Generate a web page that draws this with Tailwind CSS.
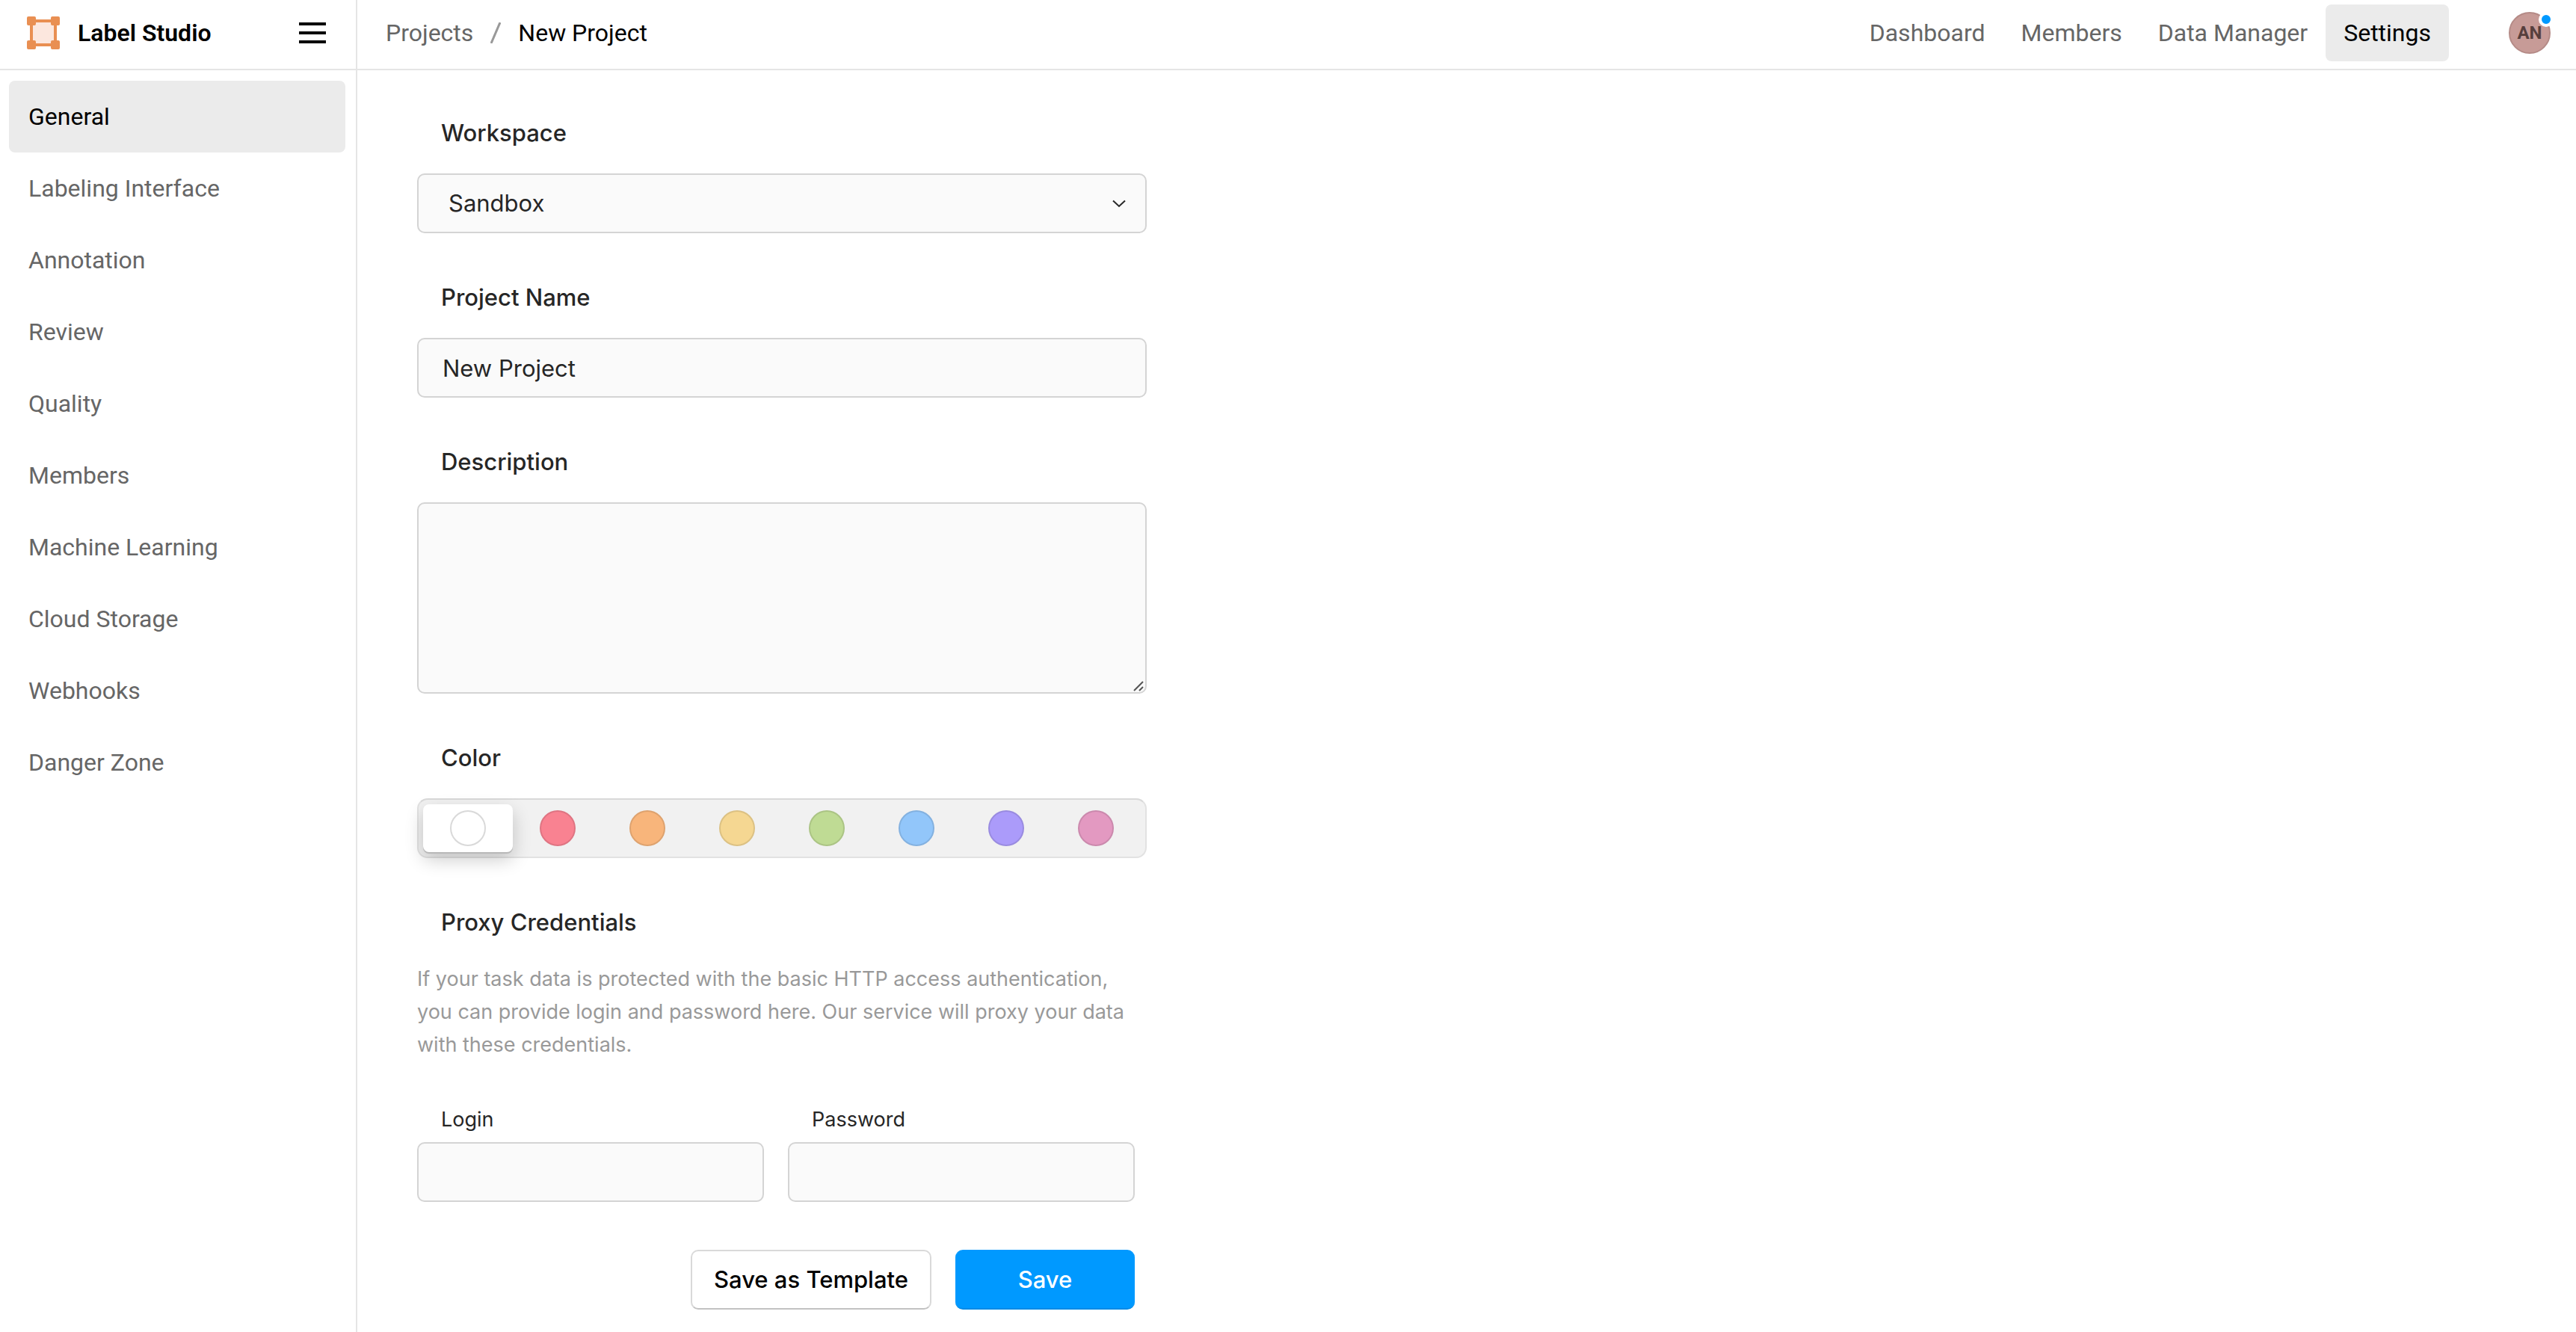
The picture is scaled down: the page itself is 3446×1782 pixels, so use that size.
<!DOCTYPE html>
<html lang="en">
<head>
<meta charset="utf-8">
<title>New Project – Settings</title>
<script src="https://cdn.jsdelivr.net/npm/@tailwindcss/browser@4"></script>
</head>
<body class="flex min-h-screen flex-col bg-white font-[Roboto,sans-serif] text-[32px] leading-[44px] text-black">
  <header class="flex h-[94px] shrink-0 border-b-2 border-[#e5e5e5]">
    <div class="flex w-[478px] shrink-0 items-center border-r-2 border-[#e5e5e5] pr-10 pb-1 pl-9">
      <svg class="size-11" viewBox="0 0 44 44" aria-hidden="true">
        <rect x="6" y="6" width="32" height="32" fill="#fce7de" stroke="#e98f52" stroke-width="4"/>
        <g fill="#e98f52"><rect width="12" height="12" rx="2"/><rect x="32" width="12" height="12" rx="2"/><rect y="32" width="12" height="12" rx="2"/><rect x="32" y="32" width="12" height="12" rx="2"/></g>
      </svg>
      <a href="#" class="ml-6 font-semibold">Label Studio</a>
      <button type="button" aria-label="Toggle menu" class="ml-auto">
        <svg class="h-7 w-9" viewBox="0 0 36 28"><path d="M0 2h36M0 14h36M0 26h36" stroke="#000" stroke-width="4"/></svg>
      </button>
    </div>
    <nav aria-label="Breadcrumb" class="flex items-center gap-[23px] pb-1 pl-[38px]">
      <a href="#" class="text-[#666]">Projects</a>
      <svg class="h-7 w-[14px]" viewBox="0 0 14 28" aria-hidden="true"><path d="M1 28L13 0" stroke="#999" stroke-width="3"/></svg>
      <a href="#">New Project</a>
    </nav>
    <nav aria-label="Project" class="ml-auto flex items-center pr-20 pb-1 text-[#666]">
      <a href="#" class="px-6 py-4">Dashboard</a>
      <a href="#" class="px-6 py-4">Members</a>
      <a href="#" class="px-6 py-4">Data Manager</a>
      <a href="#" class="rounded-lg bg-[#ebebeb] px-6 py-4 text-black">Settings</a>
    </nav>
    <div class="flex items-center pr-[34px] pb-1">
      <button type="button" class="relative flex size-14 items-center justify-center rounded-full border-2 border-[#b58b87] bg-[#c79b97] text-2xl font-bold text-[#573f3d]">AN
        <span class="absolute -top-0.5 -right-1.5 size-5 rounded-full border-4 border-white bg-[#09f]"></span>
      </button>
    </div>
  </header>
  <div class="flex grow">
    <aside class="w-[478px] shrink-0 border-r-2 border-[#e5e5e5] py-[14px] pr-[14px] pl-3">
      <nav aria-label="Settings" class="flex flex-col text-[#666]">
        <a href="#" class="rounded-lg bg-[#ebebeb] px-[26px] py-[26px] text-black">General</a>
        <a href="#" class="px-[26px] py-[26px]">Labeling Interface</a>
        <a href="#" class="px-[26px] py-[26px]">Annotation</a>
        <a href="#" class="px-[26px] py-[26px]">Review</a>
        <a href="#" class="px-[26px] py-[26px]">Quality</a>
        <a href="#" class="px-[26px] py-[26px]">Members</a>
        <a href="#" class="px-[26px] py-[26px]">Machine Learning</a>
        <a href="#" class="px-[26px] py-[26px]">Cloud Storage</a>
        <a href="#" class="px-[26px] py-[26px]">Webhooks</a>
        <a href="#" class="px-[26px] py-[26px]">Danger Zone</a>
      </nav>
    </aside>
    <main class="min-w-0 grow pt-[62px] pb-7 pl-20">
      <form class="flex w-full max-w-[976px] flex-col gap-16 font-[Inter,sans-serif] text-[31px] text-[#262626]">
        <div class="flex flex-col gap-8">
          <label for="workspace" class="pl-8 font-medium">Workspace</label>
          <div class="relative">
            <select id="workspace" class="block h-20 w-full appearance-none rounded-[10px] border-2 border-[#d4d4d4] bg-[#fafafa] pr-20 pl-10"><option>Sandbox</option></select>
            <svg class="pointer-events-none absolute top-[35px] right-7 h-[11px] w-[18px]" viewBox="0 0 18 11" aria-hidden="true"><path d="M1 1.500l8 7.500 8-7.500" fill="none" stroke="#262626" stroke-width="2"/></svg>
          </div>
        </div>
        <div class="flex flex-col gap-8">
          <label for="name" class="pl-8 font-medium">Project Name</label>
          <input id="name" type="text" value="New Project" class="h-20 w-full rounded-[10px] border-2 border-[#d4d4d4] bg-[#fafafa] px-8">
        </div>
        <div class="flex flex-col gap-8">
          <label for="description" class="pl-8 font-medium">Description</label>
          <div class="relative">
            <textarea id="description" class="block h-64 w-full resize-none rounded-[10px] border-2 border-[#d4d4d4] bg-[#fafafa] px-8 py-4"></textarea>
            <svg class="pointer-events-none absolute right-1 bottom-[3px] size-[14px]" viewBox="0 0 14 14" aria-hidden="true"><path d="M1 13L13 1M8 13l5-5" stroke="#555" stroke-width="2"/></svg>
          </div>
        </div>
        <fieldset class="flex flex-col">
          <legend class="mb-8 pl-8 font-medium">Color</legend>
          <div class="grid h-20 grid-cols-8 rounded-[14px] border-2 border-[#e2e2e2] border-t-[#d9d9d9] bg-[#f1f1f1] p-1.5">
            <label class="flex items-center justify-center rounded-lg bg-white shadow-[0_2px_0_#b8b8b8,0_10px_24px_rgba(0,0,0,0.2)]"><input type="radio" name="color" aria-label="White" checked class="size-12 appearance-none rounded-full border-2 border-black/15 bg-white"></label>
            <label class="flex items-center justify-center"><input type="radio" name="color" aria-label="Red" class="size-12 appearance-none rounded-full border-2 border-black/10 bg-[#f98291]"></label>
            <label class="flex items-center justify-center"><input type="radio" name="color" aria-label="Orange" class="size-12 appearance-none rounded-full border-2 border-black/10 bg-[#f8b57b]"></label>
            <label class="flex items-center justify-center"><input type="radio" name="color" aria-label="Yellow" class="size-12 appearance-none rounded-full border-2 border-black/10 bg-[#f5d792]"></label>
            <label class="flex items-center justify-center"><input type="radio" name="color" aria-label="Green" class="size-12 appearance-none rounded-full border-2 border-black/10 bg-[#bfdb94]"></label>
            <label class="flex items-center justify-center"><input type="radio" name="color" aria-label="Blue" class="size-12 appearance-none rounded-full border-2 border-black/10 bg-[#92c6fa]"></label>
            <label class="flex items-center justify-center"><input type="radio" name="color" aria-label="Purple" class="size-12 appearance-none rounded-full border-2 border-black/10 bg-[#ab9bfa]"></label>
            <label class="flex items-center justify-center"><input type="radio" name="color" aria-label="Pink" class="size-12 appearance-none rounded-full border-2 border-black/10 bg-[#e399c1]"></label>
          </div>
        </fieldset>
        <fieldset>
          <legend class="mb-8 pl-8 font-medium">Proxy Credentials</legend>
          <p class="text-[27px] text-[#999]">If your task data is protected with the basic HTTP access authentication, you can provide login and password here. Our service will proxy your data with these credentials.</p>
          <div class="mt-14 grid grid-cols-2 gap-8 pr-4">
            <div class="flex flex-col gap-2">
              <label for="login" class="pl-8 text-[27px]">Login</label>
              <input id="login" type="text" class="h-20 w-full rounded-[10px] border-2 border-[#d4d4d4] bg-[#fafafa] px-8">
            </div>
            <div class="flex flex-col gap-2">
              <label for="password" class="pl-8 text-[27px]">Password</label>
              <input id="password" type="password" class="h-20 w-full rounded-[10px] border-2 border-[#d4d4d4] bg-[#fafafa] px-8">
            </div>
          </div>
        </fieldset>
        <div class="flex justify-end gap-8 pr-4 font-medium">
          <button type="button" class="h-20 rounded-[10px] border-2 border-[#d9d9d9] border-b-[#c2c2c2] px-[29px] text-black">Save as Template</button>
          <button type="submit" class="h-20 w-60 rounded-[10px] border-y-2 border-t-[#09f] border-b-[#008ae6] bg-[#09f] text-white">Save</button>
        </div>
      </form>
    </main>
  </div>
</body>
</html>
